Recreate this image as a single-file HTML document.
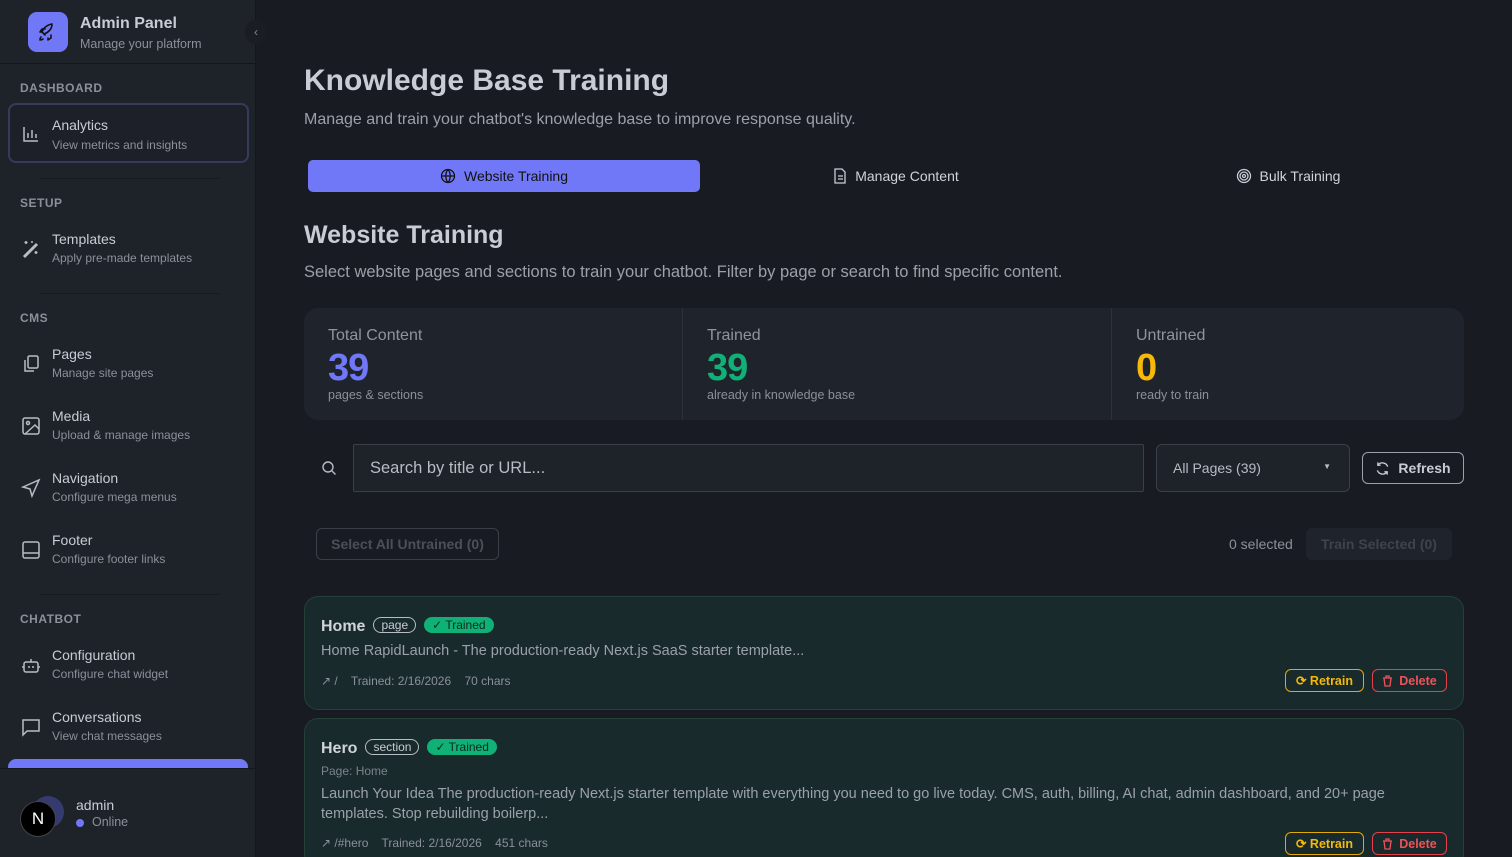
<!DOCTYPE html>
<html><head><meta charset="utf-8"><style>
*{box-sizing:border-box;margin:0;padding:0}
html{overflow:hidden;height:857px}
body{width:1512px;height:857px;overflow:hidden;background:#181b22;font-family:"Liberation Sans",sans-serif;color:#c9ccd3;position:relative}
.sb{position:absolute;left:0;top:0;width:256px;height:857px;background:#1e2229;border-right:1px solid #14171c}
.logo{position:absolute;left:28px;top:12px;width:40px;height:40px;border-radius:9px;background:#7178f8}
.t1{position:absolute;left:80px;top:15px;font-size:16px;font-weight:bold;color:#c8ccd4}
.t2{position:absolute;left:80px;top:37px;font-size:12.5px;color:#8b909a}
.hdiv{position:absolute;left:0;top:63px;width:256px;height:1px;background:#13161b}
.sec{position:absolute;left:20px;font-size:12px;font-weight:bold;color:#8b909a;letter-spacing:.5px}
.it{position:absolute;left:8px;width:241px;height:60px}
.it .n{position:absolute;left:44px;top:13px;font-size:14px;color:#c8ccd4}
.it .d{position:absolute;left:44px;top:33px;font-size:12px;color:#8b909a}
.it svg{position:absolute;left:13px;top:21px}
.sep{position:absolute;left:40px;width:180px;height:1px;background:#171a1f}
h1{position:absolute;left:304px;top:64px;font-size:30px;color:#c8ccd4;font-weight:bold}
.tab{position:absolute;top:160px;height:32px;font-size:14px;color:#d0d3da;display:flex;align-items:center;justify-content:center;gap:8px}
.stats{position:absolute;left:304px;top:308px;width:1160px;height:112px;background:#1f232b;border-radius:14px}
.st{position:absolute;top:0;height:112px}
.st .l{position:absolute;top:19px;font-size:16px;color:#8f94a0;white-space:nowrap}
.st .v{position:absolute;top:39px;font-size:38px;font-weight:bold;letter-spacing:-1px}
.st .s{position:absolute;top:80px;font-size:12.5px;color:#8b909a;white-space:nowrap}
.card{position:absolute;left:304px;width:1160px;background:#182a2b;border:1px solid #244037;border-radius:14px}
.btn{position:absolute;border-radius:6px;font-size:12.5px;font-weight:bold;display:flex;align-items:center;justify-content:center;gap:6px;height:23px}
.pill{display:inline-block;border:1px solid #b8bcc4;border-radius:10px;font-size:12px;font-weight:normal;padding:0 7px;line-height:14px;color:#c8ccd4;margin-left:8px;vertical-align:2px}
.tr{display:inline-block;background:#10b177;border-radius:8px;font-size:12px;font-weight:normal;padding:0 8px;line-height:16px;color:#0b2a1e;margin-left:8px;vertical-align:2px}
</style></head><body>
<div class="sb">
<div class="logo"><svg width="40" height="40" viewBox="0 0 40 40" fill="none" stroke="#111" stroke-width="1.6" stroke-linecap="round" stroke-linejoin="round"><path d="M17 23l-3-3c1-3 4-7 10-8 0 6-5 9-8 10z"/><path d="M14 20l-2 0 2-3h3M20 26v2l3-2v-3"/><path d="M13 25c-1 1-1 3-1 3s2 0 3-1"/></svg></div>
<div class="t1">Admin Panel</div><div class="t2">Manage your platform</div>
<div style="position:absolute;left:245px;top:20px;width:22px;height:24px;border-radius:11px;background:#1a1d23;color:#888;font-size:12px;text-align:center;line-height:24px">‹</div>
<div class="hdiv"></div>
<div class="sec" style="top:81px">DASHBOARD</div>
<div class="it" style="top:103px;border:2px solid #363b5e;border-radius:8px;background:#1d2029"><svg width="20" height="20" viewBox="0 0 20 20" fill="none" stroke="#b8bcc4" stroke-width="1.5" style="left:11px;top:19px"><path d="M3 3v14h14M7 14V9M11 14V6M15 14v-4"/></svg><div class="n" style="left:42px;top:12px">Analytics</div><div class="d" style="left:42px;top:33px">View metrics and insights</div></div>
<div class="sep" style="top:178px"></div>
<div class="sec" style="top:196px">SETUP</div>
<div class="it" style="top:218px"><svg width="20" height="20" viewBox="0 0 20 20" fill="none" stroke="#b8bcc4" stroke-width="1.5"><path d="M3 17L15 5l1 1L4 18zM5 2v3M3.5 3.5h3M15 12v3M13.5 13.5h3M11 2v2"/></svg><div class="n">Templates</div><div class="d">Apply pre-made templates</div></div>
<div class="sep" style="top:293px"></div>
<div class="sec" style="top:311px">CMS</div>
<div class="it" style="top:333px"><svg width="20" height="20" viewBox="0 0 20 20" fill="none" stroke="#b8bcc4" stroke-width="1.5"><rect x="7" y="2" width="10" height="12" rx="1.5"/><path d="M4 6v11h9"/></svg><div class="n">Pages</div><div class="d">Manage site pages</div></div>
<div class="it" style="top:395px"><svg width="20" height="20" viewBox="0 0 20 20" fill="none" stroke="#b8bcc4" stroke-width="1.5"><rect x="2" y="2" width="16" height="16" rx="2"/><circle cx="7" cy="7" r="1.5"/><path d="M18 13l-4-4-10 9"/></svg><div class="n">Media</div><div class="d">Upload &amp; manage images</div></div>
<div class="it" style="top:457px"><svg width="20" height="20" viewBox="0 0 20 20" fill="none" stroke="#b8bcc4" stroke-width="1.5"><path d="M2 9l16-7-7 16-2-7z"/></svg><div class="n">Navigation</div><div class="d">Configure mega menus</div></div>
<div class="it" style="top:519px"><svg width="20" height="20" viewBox="0 0 20 20" fill="none" stroke="#b8bcc4" stroke-width="1.5"><rect x="2" y="2" width="16" height="16" rx="2"/><path d="M2 13h16"/></svg><div class="n">Footer</div><div class="d">Configure footer links</div></div>
<div class="sep" style="top:594px"></div>
<div class="sec" style="top:612px">CHATBOT</div>
<div class="it" style="top:634px"><svg width="20" height="20" viewBox="0 0 20 20" fill="none" stroke="#b8bcc4" stroke-width="1.5"><rect x="3" y="7" width="14" height="10" rx="2"/><path d="M10 7V4M1 12h2M17 12h2M8 11v2M12 11v2"/></svg><div class="n">Configuration</div><div class="d">Configure chat widget</div></div>
<div class="it" style="top:696px"><svg width="20" height="20" viewBox="0 0 20 20" fill="none" stroke="#b8bcc4" stroke-width="1.5"><path d="M2 3h16v11H6l-4 4z"/></svg><div class="n">Conversations</div><div class="d">View chat messages</div></div>
<div style="position:absolute;left:8px;top:759px;width:240px;height:9px;background:#7178f8;border-radius:8px 8px 0 0"></div>
<div style="position:absolute;left:0;top:768px;width:256px;height:1px;background:#14171c"></div>
<div style="position:absolute;left:32px;top:796px;width:32px;height:32px;border-radius:50%;background:#353b6e"></div>
<div style="position:absolute;left:20px;top:801px;width:36px;height:36px;border-radius:50%;background:#000;border:1px solid #444;color:#fff;font-size:17px;text-align:center;line-height:34px">N</div>
<div style="position:absolute;left:76px;top:797px;font-size:14px;color:#c8ccd4">admin</div>
<div style="position:absolute;left:76px;top:819px;width:8px;height:8px;border-radius:50%;background:#7178f8"></div>
<div style="position:absolute;left:92px;top:815px;font-size:12.5px;color:#8b909a">Online</div>
</div>

<h1>Knowledge Base Training</h1>
<div style="position:absolute;left:304px;top:111px;font-size:16px;color:#9ba0aa">Manage and train your chatbot's knowledge base to improve response quality.</div>
<div class="tab" style="left:308px;width:392px;background:#7178f8;border-radius:5px;color:#111">
<svg width="16" height="16" viewBox="0 0 16 16" fill="none" stroke="#111" stroke-width="1.3"><circle cx="8" cy="8" r="6.5"/><path d="M1.5 8h13M8 1.5c-3 3.5-3 9.5 0 13M8 1.5c3 3.5 3 9.5 0 13"/></svg>Website Training</div>
<div class="tab" style="left:700px;width:392px"><svg width="14" height="16" viewBox="0 0 14 16" fill="none" stroke="#c8ccd4" stroke-width="1.3"><path d="M2 1h7l3 3v11H2zM5 8h5M5 11h5"/></svg>Manage Content</div>
<div class="tab" style="left:1092px;width:392px"><svg width="16" height="16" viewBox="0 0 16 16" fill="none" stroke="#c8ccd4" stroke-width="1.3"><circle cx="8" cy="8" r="6.5"/><circle cx="8" cy="8" r="4"/><circle cx="8" cy="8" r="1.5"/></svg>Bulk Training</div>
<div style="position:absolute;left:304px;top:221px;font-size:25px;font-weight:bold;color:#c8ccd4">Website Training</div>
<div style="position:absolute;left:304px;top:263px;font-size:16.5px;color:#9ba0aa">Select website pages and sections to train your chatbot. Filter by page or search to find specific content.</div>

<div class="stats">
<div class="st" style="left:24px"><div class="l">Total Content</div><div class="v" style="color:#7178f8">39</div><div class="s">pages &amp; sections</div></div>
<div style="position:absolute;left:378px;top:0;width:1px;height:112px;background:#2d323a"></div>
<div class="st" style="left:403px"><div class="l">Trained</div><div class="v" style="color:#10b177">39</div><div class="s">already in knowledge base</div></div>
<div style="position:absolute;left:807px;top:0;width:1px;height:112px;background:#2d323a"></div>
<div class="st" style="left:832px"><div class="l">Untrained</div><div class="v" style="color:#f5b80b">0</div><div class="s">ready to train</div></div>
</div>

<svg style="position:absolute;left:321px;top:460px" width="16" height="16" viewBox="0 0 16 16" fill="none" stroke="#b8bcc4" stroke-width="1.4"><circle cx="7" cy="7" r="5"/><path d="M11 11l3.5 3.5"/></svg>
<div style="position:absolute;left:353px;top:444px;width:791px;height:48px;border:1px solid #3a3f48;background:#1e2229;border-radius:2px;font-size:16.5px;color:#b8bcc4;padding:14px 16px">Search by title or URL...</div>
<div style="position:absolute;left:1156px;top:444px;width:194px;height:48px;border:1px solid #3a3f48;background:#1e2229;border-radius:6px;font-size:14px;color:#b8bcc4;padding:15px 16px">All Pages (39)<span style="position:absolute;right:18px;top:17px;font-size:8px">▼</span></div>
<div style="position:absolute;left:1362px;top:452px;width:102px;height:32px;border:1px solid #9ba0aa;border-radius:6px;font-size:14px;font-weight:bold;color:#c8ccd4;display:flex;align-items:center;justify-content:center;gap:8px"><svg width="15" height="15" viewBox="0 0 16 16" fill="none" stroke="#c8ccd4" stroke-width="1.4"><path d="M13.5 6A6 6 0 0 0 3 4.5M2.5 10a6 6 0 0 0 10.5 1.5M3 1.5v3h3M13 14.5v-3h-3"/></svg>Refresh</div>

<div style="position:absolute;left:316px;top:528px;width:183px;height:32px;border:1px solid #3a3f48;border-radius:6px;font-size:14px;font-weight:bold;color:#4a4f58;text-align:center;line-height:30px">Select All Untrained (0)</div>
<div style="position:absolute;left:1229px;top:536px;font-size:14px;color:#8b909a">0 selected</div>
<div style="position:absolute;left:1306px;top:528px;width:146px;height:32px;background:#1f232b;border-radius:6px;font-size:14px;font-weight:bold;color:#3e434c;text-align:center;line-height:32px">Train Selected (0)</div>

<div class="card" style="top:596px;height:114px">
<div style="position:absolute;left:16px;top:20px;font-size:16px;font-weight:bold;color:#d0d3da">Home<span class="pill">page</span><span class="tr">✓ Trained</span></div>
<div style="position:absolute;left:16px;top:46px;font-size:14.5px;color:#9ba0aa">Home RapidLaunch - The production-ready Next.js SaaS starter template...</div>
<div style="position:absolute;left:16px;top:77px;font-size:12px;color:#8b909a">↗ /&nbsp;&nbsp;&nbsp; Trained: 2/16/2026&nbsp;&nbsp;&nbsp; 70 chars</div>
<div class="btn" style="left:980px;top:72px;width:79px;border:1px solid #e2a90a;color:#f5b80b">⟳ Retrain</div>
<div class="btn" style="left:1067px;top:72px;width:75px;border:1px solid #e8404a;color:#f0525a"><svg width="11" height="12" viewBox="0 0 11 12" fill="none" stroke="#f0525a" stroke-width="1.3"><path d="M1 3h9M4 3V1h3v2M2 3l1 8h5l1-8"/></svg>Delete</div>
</div>
<div class="card" style="top:718px;height:150px">
<div style="position:absolute;left:16px;top:20px;font-size:16px;font-weight:bold;color:#d0d3da">Hero<span class="pill">section</span><span class="tr">✓ Trained</span></div>
<div style="position:absolute;left:16px;top:45px;font-size:12px;color:#7d828c">Page: Home</div>
<div style="position:absolute;left:16px;top:65px;width:1110px;font-size:14.5px;line-height:20px;color:#9ba0aa">Launch Your Idea The production-ready Next.js starter template with everything you need to go live today. CMS, auth, billing, AI chat, admin dashboard, and 20+ page templates. Stop rebuilding boilerp...</div>
<div style="position:absolute;left:16px;top:117px;font-size:12px;color:#8b909a">↗ /#hero&nbsp;&nbsp;&nbsp; Trained: 2/16/2026&nbsp;&nbsp;&nbsp; 451 chars</div>
<div class="btn" style="left:980px;top:113px;width:79px;border:1px solid #e2a90a;color:#f5b80b">⟳ Retrain</div>
<div class="btn" style="left:1067px;top:113px;width:75px;border:1px solid #e8404a;color:#f0525a"><svg width="11" height="12" viewBox="0 0 11 12" fill="none" stroke="#f0525a" stroke-width="1.3"><path d="M1 3h9M4 3V1h3v2M2 3l1 8h5l1-8"/></svg>Delete</div>
</div>
</body></html>
